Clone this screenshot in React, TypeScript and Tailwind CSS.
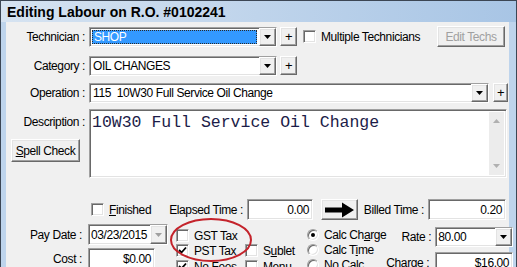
import React from 'react';

const sunken =
  'border border-t-[#a0a0a0] border-l-[#a0a0a0] border-b-white border-r-white shadow-[inset_1px_1px_0_#696969,inset_-1px_-1px_0_#e3e3e3] bg-white';
const raised =
  'border border-t-white border-l-white border-b-[#696969] border-r-[#696969] shadow-[inset_-1px_-1px_0_#a0a0a0,inset_1px_1px_0_#e3e3e3] bg-[#f0f0f0]';

function DropBtn({ disabled = false }: { disabled?: boolean }) {
  return (
    <div className={`${raised} flex h-full w-[17px] shrink-0 items-center justify-center`}>
      <svg width="7" height="4" viewBox="0 0 7 4">
        <path d="M0 0h7L3.5 4z" fill={disabled ? '#a0a0a0' : '#000'} />
      </svg>
    </div>
  );
}

function PlusBtn({ w = 'w-[17px]' }: { w?: string }) {
  return (
    <div className={`${raised} ${w} flex h-[19px] shrink-0 items-center justify-center text-[13px] leading-none`}>
      +
    </div>
  );
}

function Check({ checked = false }: { checked?: boolean }) {
  return (
    <div className={`${sunken} flex h-[13px] w-[13px] shrink-0 items-center justify-center`}>
      {checked && (
        <svg width="9" height="9" viewBox="0 0 9 9">
          <path d="M1 4l2.5 2.5L8 1.5" stroke="#000" strokeWidth="1.8" fill="none" />
        </svg>
      )}
    </div>
  );
}

function Radio({ checked = false }: { checked?: boolean }) {
  return (
    <div className="flex h-[12px] w-[12px] shrink-0 items-center justify-center rounded-full border border-t-[#a0a0a0] border-l-[#a0a0a0] border-b-white border-r-white bg-white shadow-[inset_1px_1px_0_#696969,inset_-1px_-1px_0_#e3e3e3]">
      {checked && <div className="h-[4px] w-[4px] rounded-full bg-black" />}
    </div>
  );
}

function Label({ children, className = '' }: { children: React.ReactNode; className?: string }) {
  return <div className={`text-right whitespace-nowrap ${className}`}>{children}</div>;
}

export default function App() {
  return (
    <div className="h-[267px] w-[517px] overflow-hidden bg-[#f0f0f0] font-['Liberation_Sans',Arial,sans-serif] text-[12px] leading-[14px] tracking-[-0.4px] text-black">
      <div className="relative flex h-[268px] flex-col border-x border-t border-[#3c4654] bg-[#bed4ec]">
        {/* title bar */}
        <div className="flex h-[21px] shrink-0 items-center bg-gradient-to-r from-[#d6e3f1] to-[#a8c5e5] pl-[6px] text-[14px] font-bold tracking-normal">
          Editing Labour on R.O. #0102241
        </div>

        <div className="relative ml-[5px] mr-[7px] flex flex-1 flex-col whitespace-nowrap bg-[#f0f0f0] pt-[4px]">
          {/* Technician */}
          <div className="grid grid-cols-[79px_1fr] items-center gap-x-[4px]">
            <Label>Technician :</Label>
            <div className="flex h-[21px] items-center">
              <div className={`${sunken} flex h-[20px] w-[188px] items-stretch`}>
                <div className="m-[2px] flex flex-1 items-center border border-dotted border-[#2a2a2a] bg-[#3399ff] pl-[1px] text-white">
                  SHOP
                </div>
                <DropBtn />
              </div>
              <div className="ml-[3px]">
                <PlusBtn />
              </div>
              <div className="ml-[6px]">
                <Check />
              </div>
              <span className="ml-[5px]">Multiple Technicians</span>
              <div className={`${raised} ml-auto mr-[4px] flex h-[21px] w-[68px] items-center justify-center text-[#a0a0a0]`}>
                Edit Techs
              </div>
            </div>
          </div>

          {/* Category */}
          <div className="mt-[8px] grid grid-cols-[79px_1fr] items-center gap-x-[4px]">
            <Label>Category :</Label>
            <div className="flex h-[21px] items-center">
              <div className={`${sunken} flex h-[20px] w-[188px] items-stretch`}>
                <div className="flex flex-1 items-center pl-[3px]">OIL CHANGES</div>
                <DropBtn />
              </div>
              <div className="ml-[3px]">
                <PlusBtn />
              </div>
            </div>
          </div>

          {/* Operation */}
          <div className="mt-[6px] grid grid-cols-[79px_1fr] items-center gap-x-[4px]">
            <Label>Operation :</Label>
            <div className="flex h-[21px] items-center">
              <div className={`${sunken} flex h-[20px] w-[400px] items-stretch`}>
                <div className="flex flex-1 items-center pl-[3px] whitespace-pre">115  10W30 Full Service Oil Change</div>
                <DropBtn />
              </div>
              <div className="ml-[4px]">
                <PlusBtn w="w-[15px]" />
              </div>
            </div>
          </div>

          {/* Description */}
          <div className="mt-[6px] grid grid-cols-[79px_1fr] gap-x-[4px]">
            <div className="flex flex-col items-end">
              <Label className="mt-[6px]">Description :</Label>
              <div className={`${raised} mt-[10px] mr-[5px] flex h-[23px] w-[69px] items-center justify-center`}>
                <span>
                  <span className="underline">S</span>pell Check
                </span>
              </div>
            </div>
            <div className={`${sunken} flex h-[69px] w-[418px]`}>
              <div className="flex-1 pl-[2px] pt-[3px] font-['Liberation_Mono','Courier_New',monospace] text-[16.5px] leading-[19px] tracking-normal text-[#1c1c48]">
                10W30 Full Service Oil Change
              </div>
              <div className="m-[2px] flex w-[15px] flex-col items-center justify-between bg-[#ececec] py-[7px]">
                <svg width="7" height="4" viewBox="0 0 7 4">
                  <path d="M0 4h7L3.5 0z" fill="#b0b0b0" />
                </svg>
                <svg width="7" height="4" viewBox="0 0 7 4">
                  <path d="M0 0h7L3.5 4z" fill="#b0b0b0" />
                </svg>
              </div>
            </div>
          </div>

          {/* Finished / Elapsed / Billed */}
          <div className="mt-[21px] flex h-[21px] items-center">
            <div className="flex w-[160px] items-center pl-[85px]">
              <Check />
              <span className="ml-[5px]">
                <span className="underline">F</span>inished
              </span>
            </div>
            <Label className="w-[77px]">Elapsed Time :</Label>
            <div className={`${sunken} ml-[4px] flex h-[21px] w-[66px] items-center justify-end pr-[3px]`}>0.00</div>
            <div className={`${raised} ml-[8px] flex h-[21px] w-[37px] items-center justify-center`}>
              <svg width="31" height="16" viewBox="0 0 31 16">
                <path d="M1 5.5h17V0.5L30 8 18 15.5v-5H1z" fill="#000" />
              </svg>
            </div>
            <Label className="w-[66px]">Billed Time :</Label>
            <div className={`${sunken} ml-[4px] flex h-[21px] w-[78px] items-center justify-end pr-[3px]`}>0.20</div>
          </div>

          {/* lower block */}
          <div className="mt-[4px] flex">
            <div className="flex w-[164px] flex-col">
              <div className="grid grid-cols-[76px_1fr] items-center gap-x-[6px]">
                <Label>Pay Date :</Label>
                <div className={`${sunken} flex h-[21px] w-[80px] items-stretch`}>
                  <div className="flex flex-1 items-center pl-[2px]">03/23/2015</div>
                  <DropBtn disabled />
                </div>
              </div>
              <div className="mt-[3px] grid grid-cols-[76px_1fr] items-center gap-x-[6px]">
                <Label>Cost :</Label>
                <div className={`${sunken} flex h-[21px] w-[67px] items-center justify-end pr-[3px]`}>$0.00</div>
              </div>
            </div>

            <div className="ml-[8px] mt-[4px] grid w-[131px] grid-cols-[69px_62px] auto-rows-[15px] content-start">
              <div className="flex items-center">
                <Check />
                <span className="ml-[5px]">GST Tax</span>
              </div>
              <div />
              <div className="flex items-center">
                <Check checked />
                <span className="ml-[5px]">PST Tax</span>
              </div>
              <div className="flex items-center">
                <Check />
                <span className="ml-[5px]">
                  S<span className="underline">u</span>blet
                </span>
              </div>
              <div className="mt-[2px] flex items-center">
                <Check checked />
                <span className="ml-[5px]">No Fees</span>
              </div>
              <div className="mt-[2px] flex items-center">
                <Check />
                <span className="ml-[5px]">Menu</span>
              </div>
            </div>

            <div className="mt-[5px] flex flex-col gap-y-[3px]">
              <div className="flex h-[12px] items-center">
                <Radio checked />
                <span className="ml-[5px]">
                  Calc Ch<span className="underline">a</span>rge
                </span>
              </div>
              <div className="flex h-[12px] items-center">
                <Radio />
                <span className="ml-[5px]">
                  Calc T<span className="underline">i</span>me
                </span>
              </div>
              <div className="flex h-[12px] items-center">
                <Radio />
                <span className="ml-[5px]">No Calc</span>
              </div>
            </div>

            <div className="ml-auto mr-[2px] mt-[3px] grid grid-cols-[auto_78px] items-center gap-x-[4px] gap-y-[5px]">
              <Label>Rate :</Label>
              <div className={`${sunken} flex h-[20px] items-stretch`}>
                <div className="flex flex-1 items-center pl-[2px]">80.00</div>
                <DropBtn />
              </div>
              <Label className="mr-[2px]">Charge :</Label>
              <div className={`${sunken} flex h-[21px] items-center justify-end pr-[3px]`}>$16.00</div>
            </div>
          </div>

          {/* red annotation circle */}
          <svg className="pointer-events-none absolute left-[163px] top-[195px]" width="84" height="46" viewBox="0 0 84 46">
            <ellipse cx="42" cy="23" rx="40" ry="21" fill="none" stroke="#c4232b" strokeWidth="2" />
          </svg>
        </div>
      </div>
    </div>
  );
}
